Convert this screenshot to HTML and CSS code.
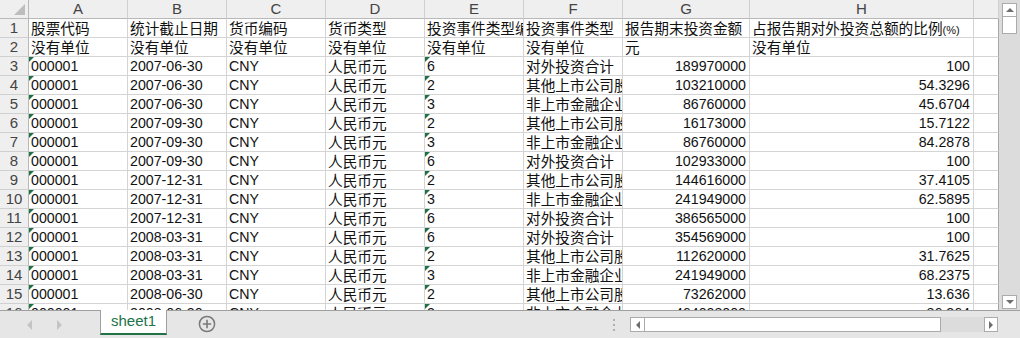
FILE: index.html
```html
<!DOCTYPE html>
<html lang="zh-CN">
<head>
<meta charset="utf-8">
<title>sheet1</title>
<link rel="stylesheet" href="styles.css">
</head>
<body>
<div class="app">
  <div class="main">
    <div class="sheet">
      <div class="grid">
        <div class="ch corner"><span class="corner-tri"></span></div>
        <div class="ch">A</div><div class="ch">B</div><div class="ch">C</div><div class="ch">D</div><div class="ch">E</div><div class="ch">F</div><div class="ch">G</div><div class="ch">H</div><div class="ch last"></div>

        <div class="rh">1</div>
        <div class="c">股票代码</div><div class="c">统计截止日期</div><div class="c">货币编码</div><div class="c">货币类型</div><div class="c">投资事件类型编码</div><div class="c">投资事件类型</div><div class="c">报告期末投资金额（元）</div><div class="c">占报告期对外投资总额的比例<span class="pct">(%)</span></div><div class="c last"></div>

        <div class="rh">2</div>
        <div class="c">没有单位</div><div class="c">没有单位</div><div class="c">没有单位</div><div class="c">没有单位</div><div class="c">没有单位</div><div class="c">没有单位</div><div class="c">元</div><div class="c">没有单位</div><div class="c last"></div>

        <div class="rh">3</div>
        <div class="c n t">000001</div><div class="c n">2007-06-30</div><div class="c n">CNY</div><div class="c">人民币元</div><div class="c n t">6</div><div class="c">对外投资合计</div><div class="c n r">189970000</div><div class="c n r">100</div><div class="c last"></div>

        <div class="rh">4</div>
        <div class="c n t">000001</div><div class="c n">2007-06-30</div><div class="c n">CNY</div><div class="c">人民币元</div><div class="c n t">2</div><div class="c">其他上市公司股权</div><div class="c n r">103210000</div><div class="c n r">54.3296</div><div class="c last"></div>

        <div class="rh">5</div>
        <div class="c n t">000001</div><div class="c n">2007-06-30</div><div class="c n">CNY</div><div class="c">人民币元</div><div class="c n t">3</div><div class="c">非上市金融企业股权</div><div class="c n r">86760000</div><div class="c n r">45.6704</div><div class="c last"></div>

        <div class="rh">6</div>
        <div class="c n t">000001</div><div class="c n">2007-09-30</div><div class="c n">CNY</div><div class="c">人民币元</div><div class="c n t">2</div><div class="c">其他上市公司股权</div><div class="c n r">16173000</div><div class="c n r">15.7122</div><div class="c last"></div>

        <div class="rh">7</div>
        <div class="c n t">000001</div><div class="c n">2007-09-30</div><div class="c n">CNY</div><div class="c">人民币元</div><div class="c n t">3</div><div class="c">非上市金融企业股权</div><div class="c n r">86760000</div><div class="c n r">84.2878</div><div class="c last"></div>

        <div class="rh">8</div>
        <div class="c n t">000001</div><div class="c n">2007-09-30</div><div class="c n">CNY</div><div class="c">人民币元</div><div class="c n t">6</div><div class="c">对外投资合计</div><div class="c n r">102933000</div><div class="c n r">100</div><div class="c last"></div>

        <div class="rh">9</div>
        <div class="c n t">000001</div><div class="c n">2007-12-31</div><div class="c n">CNY</div><div class="c">人民币元</div><div class="c n t">2</div><div class="c">其他上市公司股权</div><div class="c n r">144616000</div><div class="c n r">37.4105</div><div class="c last"></div>

        <div class="rh">10</div>
        <div class="c n t">000001</div><div class="c n">2007-12-31</div><div class="c n">CNY</div><div class="c">人民币元</div><div class="c n t">3</div><div class="c">非上市金融企业股权</div><div class="c n r">241949000</div><div class="c n r">62.5895</div><div class="c last"></div>

        <div class="rh">11</div>
        <div class="c n t">000001</div><div class="c n">2007-12-31</div><div class="c n">CNY</div><div class="c">人民币元</div><div class="c n t">6</div><div class="c">对外投资合计</div><div class="c n r">386565000</div><div class="c n r">100</div><div class="c last"></div>

        <div class="rh">12</div>
        <div class="c n t">000001</div><div class="c n">2008-03-31</div><div class="c n">CNY</div><div class="c">人民币元</div><div class="c n t">6</div><div class="c">对外投资合计</div><div class="c n r">354569000</div><div class="c n r">100</div><div class="c last"></div>

        <div class="rh">13</div>
        <div class="c n t">000001</div><div class="c n">2008-03-31</div><div class="c n">CNY</div><div class="c">人民币元</div><div class="c n t">2</div><div class="c">其他上市公司股权</div><div class="c n r">112620000</div><div class="c n r">31.7625</div><div class="c last"></div>

        <div class="rh">14</div>
        <div class="c n t">000001</div><div class="c n">2008-03-31</div><div class="c n">CNY</div><div class="c">人民币元</div><div class="c n t">3</div><div class="c">非上市金融企业股权</div><div class="c n r">241949000</div><div class="c n r">68.2375</div><div class="c last"></div>

        <div class="rh">15</div>
        <div class="c n t">000001</div><div class="c n">2008-06-30</div><div class="c n">CNY</div><div class="c">人民币元</div><div class="c n t">2</div><div class="c">其他上市公司股权</div><div class="c n r">73262000</div><div class="c n r">13.636</div><div class="c last"></div>

        <div class="rh">16</div>
        <div class="c n t">000001</div><div class="c n">2008-06-30</div><div class="c n">CNY</div><div class="c">人民币元</div><div class="c n t">3</div><div class="c">非上市金融企业股权</div><div class="c n r">464008000</div><div class="c n r">86.364</div><div class="c last"></div>
      </div>
    </div>
    <div class="vscroll">
      <div class="vbtn up"><span class="tri-up"></span></div>
      <div class="vthumb"></div>
      <div class="vtrack"></div>
      <div class="vbtn down"><span class="tri-down"></span></div>
    </div>
  </div>
  <div class="tabbar">
    <div class="nav">
      <span class="nav-l"></span>
      <span class="nav-r"></span>
    </div>
    <div class="tab">sheet1</div>
    <div class="plus">
      <svg width="18" height="18" viewBox="0 0 18 18"><circle cx="9" cy="9" r="7.6" fill="none" stroke="#7a7a7a" stroke-width="1.5"/><path d="M9 4.8v8.4M4.8 9h8.4" stroke="#7a7a7a" stroke-width="1.6"/></svg>
    </div>
    <div class="split"><i></i><i></i><i></i></div>
    <div class="hscroll">
      <div class="hbtn"><span class="tri-left"></span></div>
      <div class="hthumb"></div>
      <div class="htrack"></div>
      <div class="hbtn right"><span class="tri-right"></span></div>
    </div>
  </div>
</div>
</body>
</html>
```

FILE: styles.css
```css
html, body {
  margin: 0;
  padding: 0;
  background: #e6e6e6;
}
.app {
  width: 1020px;
  height: 338px;
  overflow: hidden;
  display: flex;
  flex-direction: column;
}
.main {
  display: flex;
  height: 310px;
  flex: none;
}
.sheet {
  width: 999px;
  height: 310px;
  overflow: hidden;
  background: #fff;
  flex: none;
}
.grid {
  display: grid;
  grid-template-columns: 29px 99px 99px 99px 99px 99px 99px 127px 224px 25px;
  grid-auto-rows: 19px;
}
.grid > div {
  box-sizing: border-box;
  border-right: 1px solid #d4d4d4;
  border-bottom: 1px solid #d4d4d4;
  overflow: hidden;
  white-space: nowrap;
}
.ch {
  background: #efefef;
  color: #444;
  font-family: "Liberation Sans", sans-serif;
  font-size: 15px;
  line-height: 18px;
  text-align: center;
  border-right-color: #d0d0d0 !important;
  border-bottom-color: #b8b8b8 !important;
}
.corner {
  position: relative;
  border-right-color: #b8b8b8 !important;
}
.corner-tri {
  position: absolute;
  right: 3px;
  bottom: 3px;
  width: 0;
  height: 0;
  border-left: 11px solid transparent;
  border-bottom: 11px solid #bdbdbd;
}
.rh {
  background: #efefef;
  color: #444;
  font-family: "Liberation Sans", sans-serif;
  font-size: 15px;
  line-height: 18px;
  text-align: center;
  border-right-color: #b8b8b8 !important;
  border-bottom-color: #d0d0d0 !important;
}
.c {
  font-family: "Noto Sans CJK SC", sans-serif;
  font-size: 14.67px;
  line-height: 18px;
  color: #111;
  padding: 0 2px;
}
.c.n {
  font-family: "Liberation Sans", "Noto Sans CJK SC", sans-serif;
  font-size: 14.2px;
}
.c.r {
  text-align: right;
  padding-right: 3px;
}
.c.t {
  position: relative;
}
.c.t::before {
  content: "";
  position: absolute;
  left: 0;
  top: 0;
  width: 0;
  height: 0;
  border-top: 5px solid #1e7145;
  border-right: 5px solid transparent;
}
.pct {
  font-family: "Liberation Sans Narrow", "Liberation Sans", sans-serif;
  font-size: 11px;
}
.grid > .last {
  border-right-color: #a6a6a6;
}
.vscroll {
  width: 21px;
  height: 310px;
  display: flex;
  flex-direction: column;
  align-items: center;
  background: #dcdcdc;
  box-sizing: border-box;
  padding-top: 3px;
}
.vbtn {
  width: 15px;
  height: 14px;
  box-sizing: border-box;
  border: 1px solid #ababab;
  background: #fff;
  display: flex;
  align-items: center;
  justify-content: center;
  flex: none;
}
.vbtn.down {
  margin-bottom: 1px;
}
.vthumb {
  width: 15px;
  height: 17px;
  box-sizing: border-box;
  border: 1px solid #ababab;
  border-top: none;
  background: #fff;
  flex: none;
}
.vtrack {
  flex: 1;
}
.tri-up {
  width: 0; height: 0;
  border-left: 4px solid transparent;
  border-right: 4px solid transparent;
  border-bottom: 4px solid #6e6e6e;
}
.tri-down {
  width: 0; height: 0;
  border-left: 4px solid transparent;
  border-right: 4px solid transparent;
  border-top: 4px solid #6e6e6e;
}
.tabbar {
  height: 28px;
  display: flex;
  align-items: flex-start;
  border-top: 1px solid #a0a0a0;
  box-sizing: border-box;
  background: #e6e6e6;
  flex: none;
}
.nav {
  width: 100px;
  height: 27px;
  display: flex;
  align-items: center;
  flex: none;
}
.nav-l {
  margin-left: 27px;
  width: 0; height: 0;
  border-top: 5px solid transparent;
  border-bottom: 5px solid transparent;
  border-right: 5px solid #c4c4c4;
}
.nav-r {
  margin-left: 25px;
  width: 0; height: 0;
  border-top: 5px solid transparent;
  border-bottom: 5px solid transparent;
  border-left: 5px solid #c4c4c4;
}
.tab {
  width: 67px;
  height: 25px;
  margin-top: -1px;
  box-sizing: border-box;
  background: #fff;
  border-left: 1px solid #a0a0a0;
  border-right: 1px solid #a0a0a0;
  border-bottom: 2px solid #217346;
  color: #217346;
  font-family: "Liberation Sans", sans-serif;
  font-size: 15px;
  line-height: 22px;
  text-align: center;
  flex: none;
}
.plus {
  margin-left: 31px;
  margin-top: 4px;
  width: 18px;
  height: 18px;
  flex: none;
}
.plus svg {
  display: block;
}
.split {
  margin-left: 397px;
  margin-top: 8px;
  width: 3px;
  display: flex;
  flex-direction: column;
  gap: 3px;
  flex: none;
}
.split i {
  display: block;
  width: 2px;
  height: 2px;
  background: #b0b0b0;
}
.hscroll {
  margin-left: 14px;
  margin-top: 6px;
  width: 368px;
  height: 15px;
  display: flex;
  flex: none;
}
.hbtn {
  width: 15px;
  height: 15px;
  box-sizing: border-box;
  border: 1px solid #ababab;
  background: #fff;
  display: flex;
  align-items: center;
  justify-content: center;
  flex: none;
}
.hbtn.right {
  width: 14px;
}
.hthumb {
  width: 296px;
  height: 15px;
  box-sizing: border-box;
  border: 1px solid #ababab;
  border-left: none;
  background: #fff;
  flex: none;
}
.htrack {
  flex: 1;
  background: #dcdcdc;
}
.tri-left {
  width: 0; height: 0;
  border-top: 4px solid transparent;
  border-bottom: 4px solid transparent;
  border-right: 4px solid #6e6e6e;
}
.tri-right {
  width: 0; height: 0;
  border-top: 4px solid transparent;
  border-bottom: 4px solid transparent;
  border-left: 4px solid #6e6e6e;
}
```
